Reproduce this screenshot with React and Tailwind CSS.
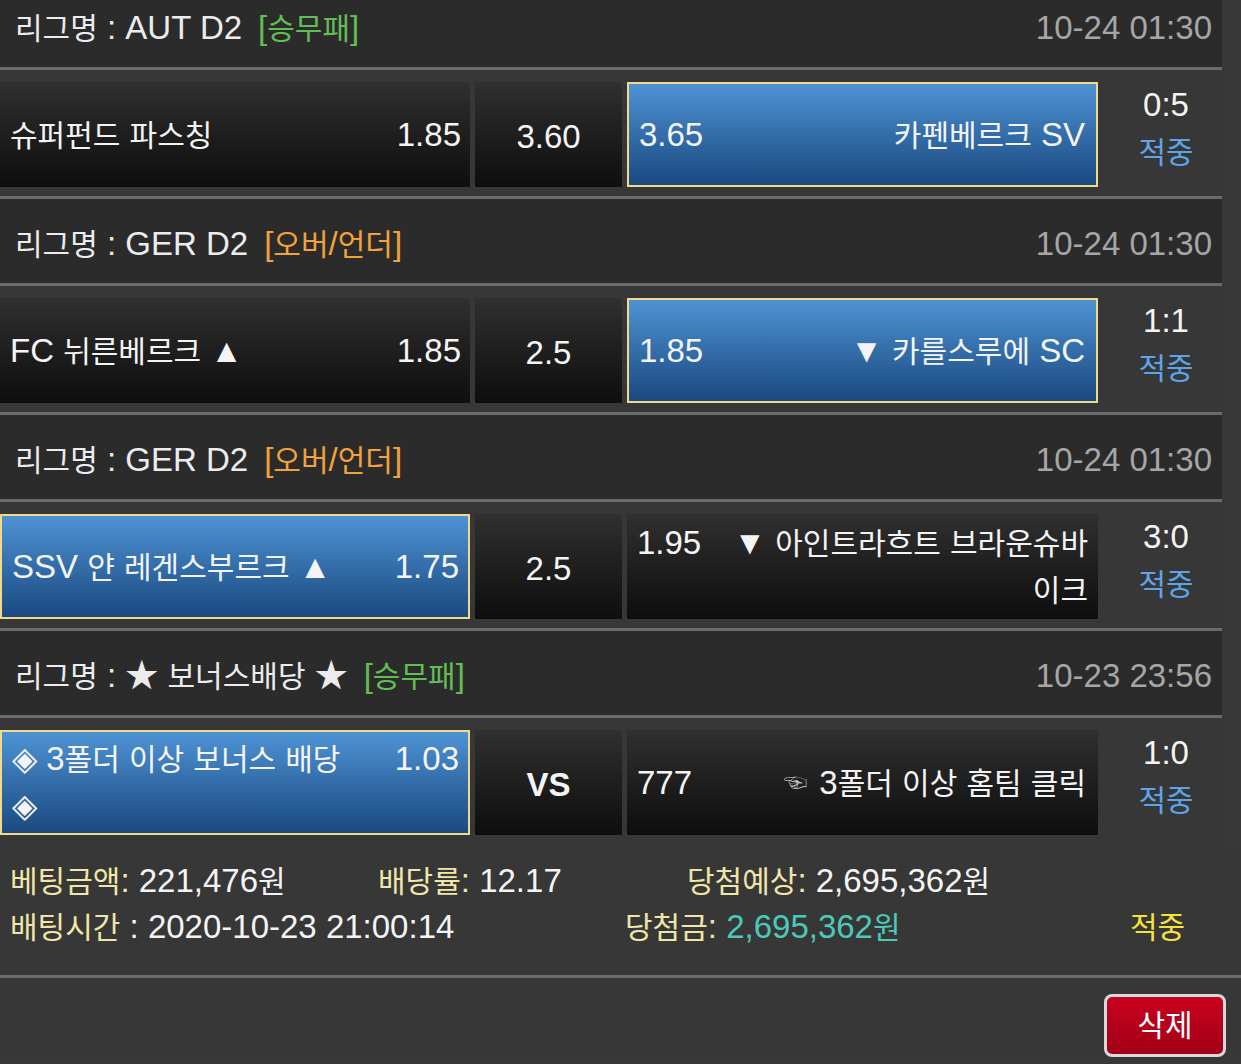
import React from 'react';

// hangul runs are set a bit smaller than latin so the mix matches the narrow app font
const HANGUL = /([\uAC00-\uD7A3]+)/;
const K = ({ t }) =>
  t.split(HANGUL).map((part, i) =>
    HANGUL.test(part) ? (
      <span key={i} className="text-[30px]">
        {part}
      </span>
    ) : (
      <React.Fragment key={i}>{part}</React.Fragment>
    )
  );

const games = [
  {
    league: '리그명 : AUT D2',
    type: '[승무패]',
    typeColor: 'text-[#62bd55]',
    date: '10-24 01:30',
    score: '0:5',
    home: { name: '슈퍼펀드 파스칭', odds: '1.85' },
    mid: '3.60',
    away: { name: '카펜베르크 SV', odds: '3.65' },
    pick: 'away',
  },
  {
    league: '리그명 : GER D2',
    type: '[오버/언더]',
    typeColor: 'text-[#f2a23a]',
    date: '10-24 01:30',
    score: '1:1',
    home: { name: 'FC 뉘른베르크 ▲', odds: '1.85' },
    mid: '2.5',
    away: { name: '▼ 카를스루에 SC', odds: '1.85' },
    pick: 'away',
  },
  {
    league: '리그명 : GER D2',
    type: '[오버/언더]',
    typeColor: 'text-[#f2a23a]',
    date: '10-24 01:30',
    score: '3:0',
    home: { name: 'SSV 얀 레겐스부르크 ▲', odds: '1.75' },
    mid: '2.5',
    away: { lines: ['▼ 아인트라흐트 브라운슈바', '이크'], odds: '1.95' },
    pick: 'home',
  },
  {
    league: '리그명 : ★ 보너스배당 ★',
    type: '[승무패]',
    typeColor: 'text-[#62bd55]',
    date: '10-23 23:56',
    score: '1:0',
    home: { lines: ['◈ 3폴더 이상 보너스 배당', '◈'], odds: '1.03' },
    mid: 'VS',
    away: { name: '3폴더 이상 홈팀 클릭', odds: '777', hand: true },
    pick: 'home',
  },
];

const Cell = ({ selected, className = '', children }) => (
  <div
    className={`h-full ${className} ${
      selected
        ? 'border-2 border-[#f2d98c] bg-linear-to-b from-[#4e93d5] to-[#1b4a80]'
        : 'bg-linear-to-b from-[#303030] to-[#0e0e0e]'
    }`}
  >
    {children}
  </div>
);

const HomeCell = ({ home, selected }) => (
  <Cell selected={selected} className="w-[470px]">
    {home.lines ? (
      <div className="flex h-full items-center pl-[10px] pr-[9px]">
        <div className="w-full leading-[46px]">
          <span className="float-right">{home.odds}</span>
          <K t={home.lines[0]} />
          <br />
          {home.lines[1]}
        </div>
      </div>
    ) : (
      <div className="flex h-full items-center justify-between pl-[10px] pr-[9px]">
        <span>
          <K t={home.name} />
        </span>
        <span>{home.odds}</span>
      </div>
    )}
  </Cell>
);

const AwayCell = ({ away, selected }) => (
  <Cell selected={selected} className="w-[471px]">
    {away.lines ? (
      <div className="flex h-full items-center px-[10px]">
        <div className="w-full text-right leading-[46px]">
          <span className="float-left mr-6">{away.odds}</span>
          <K t={away.lines[0]} />
          <br />
          <K t={away.lines[1]} />
        </div>
      </div>
    ) : (
      <div className={`flex h-full items-center justify-between pl-[10px] ${selected ? 'pr-[11px]' : 'pr-[12px]'}`}>
        <span>{away.odds}</span>
        <span>
          {away.hand && <span className="mr-3 align-[3px] text-[24px] text-[#bdbdbd]">☜</span>}
          <K t={away.name} />
        </span>
      </div>
    )}
  </Cell>
);

const GameBlock = ({ game, last }) => (
  <div>
    <div className="flex h-[87px] items-center justify-between border-b-[3px] border-[#6b6b6b] bg-[#2b2b2b] pt-[5px] pl-[15px] pr-[10px]">
      <div className="text-[#ececec]">
        <K t={game.league} />
        <span className={`ml-4 ${game.typeColor}`}>
          <K t={game.type} />
        </span>
      </div>
      <div className="text-[#a6a6a6]">{game.date}</div>
    </div>
    <div
      className={`flex bg-[#373737] pt-3 pb-[9px] ${
        last ? 'h-[126px]' : 'h-[129px] border-b-[3px] border-[#6b6b6b]'
      }`}
    >
      <HomeCell home={game.home} selected={game.pick === 'home'} />
      <Cell className="ml-[5px] w-[147px]">
        <div className={`flex h-full items-center justify-center pt-1 ${game.mid === 'VS' ? 'font-bold' : ''}`}>{game.mid}</div>
      </Cell>
      <div className="ml-[5px] h-full">
        <AwayCell away={game.away} selected={game.pick === 'away'} />
      </div>
      <div className="flex flex-1 flex-col items-center justify-center pb-[12px] pl-3 leading-[47px]">
        <span>{game.score}</span>
        <span className="text-[#5da5e8]">
          <K t="적중" />
        </span>
      </div>
    </div>
  </div>
);

export default function App() {
  return (
    <div className="min-h-[1064px] overflow-hidden bg-[#383838] font-['Liberation_Sans','Noto_Sans_CJK_KR',sans-serif] text-[33px] text-[#f4f4f4]">
      <div className="-mt-[17px] w-[1222px]">
        {games.map((g, i) => (
          <GameBlock key={i} game={g} last={i === games.length - 1} />
        ))}
      </div>

      {/* bet summary */}
      <div className="h-[134px] border-b-[3px] border-[#6b6b6b] bg-[#373737] pt-[14px] pl-[10px] leading-[45px]">
        <div className="flex">
          <span className="w-[368px]">
            <span className="text-[#efe6a8]"><K t="베팅금액:" /></span> <K t="221,476원" />
          </span>
          <span className="w-[309px]">
            <span className="text-[#efe6a8]"><K t="배당률:" /></span> 12.17
          </span>
          <span>
            <span className="text-[#efe6a8]"><K t="당첨예상:" /></span> <K t="2,695,362원" />
          </span>
        </div>
        <div className="flex">
          <span className="w-[615px]">
            <span className="text-[#efe6a8]"><K t="배팅시간" /></span> : 2020-10-23 21:00:14
          </span>
          <span className="w-[505px]">
            <span className="text-[#efe6a8]"><K t="당첨금:" /></span>{' '}
            <span className="text-[#4cc9b9]"><K t="2,695,362원" /></span>
          </span>
          <span className="text-[#f5e33c]"><K t="적중" /></span>
        </div>
      </div>

      <div className="flex justify-end bg-[#373737] pt-4 pr-[15px]">
        <button className="flex h-[63px] w-[122px] items-center justify-center rounded-lg border-[3px] border-[#d9d9d9] bg-linear-to-b from-[#c9021f] to-[#a20017] text-white">
          <K t="삭제" />
        </button>
      </div>
    </div>
  );
}
